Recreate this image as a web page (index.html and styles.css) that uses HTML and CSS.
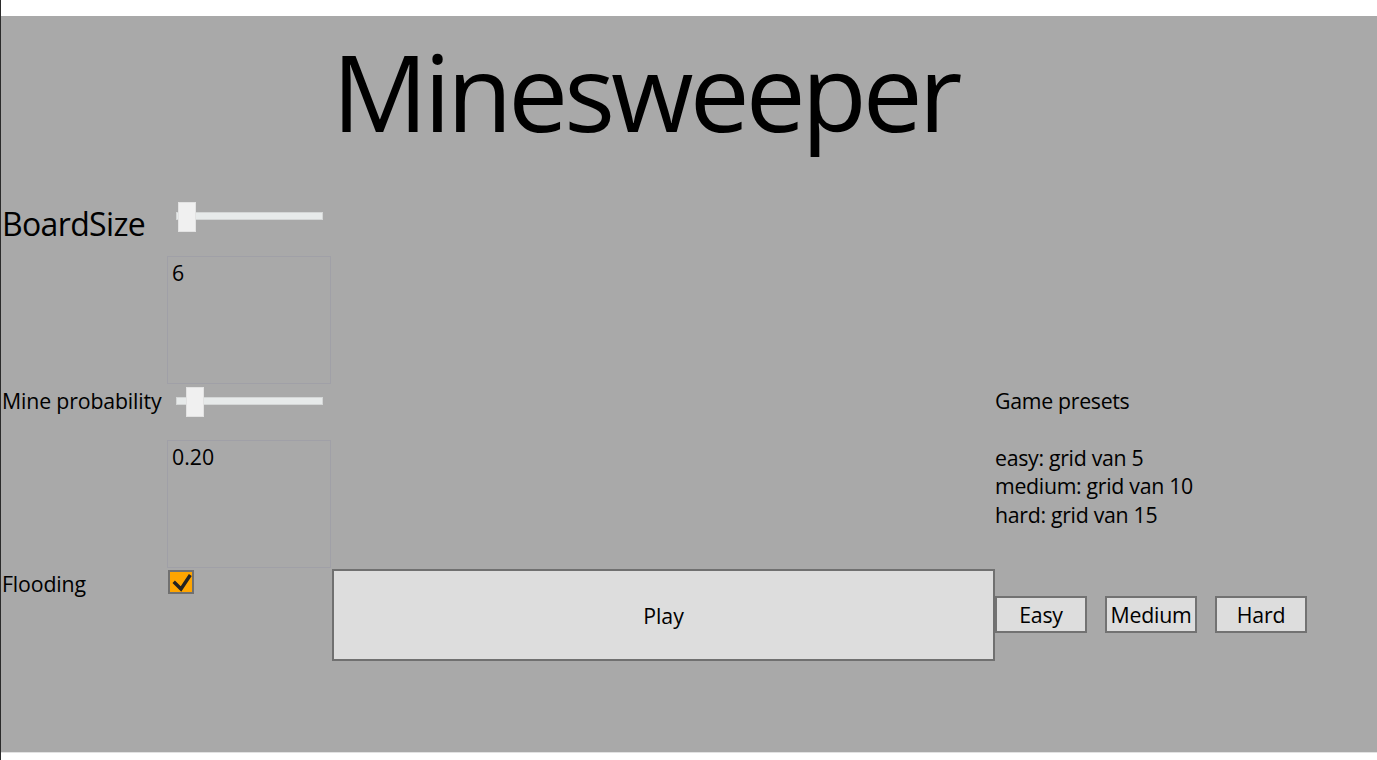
FILE: index.html
```html
<!DOCTYPE html>
<html>
<head>
<meta charset="utf-8">
<title>Minesweeper</title>
<link rel="stylesheet" href="styles.css">
</head>
<body>
<div class="topbar"></div>
<main class="app">
  <h1 class="title">Minesweeper</h1>

  <div class="label label-big r2">BoardSize</div>
  <div class="slider slider-board r2">
    <div class="track"></div>
    <div class="thumb" style="left: 2px"></div>
  </div>

  <div class="textbox r3">6</div>

  <div class="label label-mine r4">Mine probability</div>
  <div class="slider slider-mine r4">
    <div class="track"></div>
    <div class="thumb" style="left: 10px"></div>
  </div>

  <div class="presets">
    <div>Game presets</div>
    <div>&nbsp;</div>
    <div>easy: grid van 5</div>
    <div>medium: grid van 10</div>
    <div>hard: grid van 15</div>
  </div>

  <div class="textbox r5">0.20</div>

  <div class="label label-flood r6">Flooding</div>
  <div class="checkbox r6">
    <svg width="21" height="20" viewBox="0 0 21 20"><path d="M2.7 9.7 L10 17 L19.3 3" fill="none" stroke="#222" stroke-width="3.4" stroke-linejoin="miter"/></svg>
  </div>
  <button class="play r6">Play</button>
  <div class="preset-buttons r6">
    <button class="pbtn">Easy</button>
    <button class="pbtn">Medium</button>
    <button class="pbtn">Hard</button>
  </div>
</main>
<div class="bottombar"></div>
</body>
</html>
```

FILE: styles.css
```css
html, body {
  margin: 0;
  padding: 0;
  background: #ffffff;
}

body {
  width: 1376px;
  height: 760px;
  border-left: 1px solid #2b2b2b;
  font-family: "Open Sans", "Noto Sans", sans-serif;
  color: #000;
  overflow: hidden;
}

.topbar {
  height: 16px;
  background: #ffffff;
}

.bottombar {
  height: 7px;
  border-top: 1px solid #e2e2e2;
  background: #ffffff;
}

.app {
  height: 736px;
  background: #a9a9a9;
  display: grid;
  grid-template-columns: 166px 165px 663px 1fr;
  grid-template-rows: 176px 64px 128px 56px 128px 94px 1fr;
}

.title {
  grid-column: 3 / 5;
  grid-row: 1;
  margin: 0;
  padding-top: 4px;
  font-weight: 400;
  font-size: 106.7px;
  line-height: 1.33;
  letter-spacing: -4px;
  white-space: nowrap;
}

.r2 { grid-row: 2; }
.r3 { grid-row: 3; }
.r4 { grid-row: 4; }
.r5 { grid-row: 5; }
.r6 { grid-row: 6; }

.label {
  grid-column: 1;
  padding-left: 1px;
  font-size: 21.3px;
  line-height: 28.4px;
  letter-spacing: -0.15px;
  white-space: nowrap;
}

.label-big {
  font-size: 32px;
  line-height: 42.5px;
  letter-spacing: -0.65px;
  margin-top: 11px;
}

.label-mine {
  margin-top: 3px;
}

.label-flood {
  margin-top: 2px;
}

.slider {
  grid-column: 2;
  position: relative;
  margin-left: 9px;
  width: 147px;
  height: 30px;
}

.slider-board { margin-top: 10px; }
.slider-mine { margin-top: 3px; }

.track {
  margin-top: 10px;
  height: 8px;
  box-sizing: border-box;
  background: #e7eaea;
  border: 1px solid #d4d6d6;
}

.thumb {
  position: absolute;
  top: 0;
  width: 18px;
  height: 30px;
  box-sizing: border-box;
  background: #f0f0f0;
  border: 1px solid #e2e2e2;
}

.textbox {
  grid-column: 2;
  width: 164px;
  height: 128px;
  box-sizing: border-box;
  border: 1px solid #a0a0a7;
  padding: 2px 4px;
  font-size: 21.3px;
  line-height: 28.4px;
}

.presets {
  grid-column: 4;
  grid-row: 4 / 6;
  margin-top: 3px;
  font-size: 21.3px;
  line-height: 28.4px;
  letter-spacing: -0.3px;
  white-space: nowrap;
}

.checkbox {
  grid-column: 2;
  margin: 2px 0 0 1px;
  width: 26px;
  height: 24px;
  box-sizing: border-box;
  background: #ffa500;
  border: 2px solid #707070;
  display: flex;
  align-items: center;
  justify-content: center;
}

.checkbox svg {
  display: block;
}

.play {
  grid-column: 3;
  margin: 1px 0 0 0;
  height: 92px;
  box-sizing: border-box;
  background: #dddddd;
  border: 2px solid #707070;
  font-family: inherit;
  font-size: 21.3px;
  color: #000;
  padding: 0;
}

.preset-buttons {
  grid-column: 4;
  display: flex;
  gap: 18px;
  align-items: flex-start;
  margin-top: 28px;
}

.pbtn {
  width: 92px;
  height: 37px;
  box-sizing: border-box;
  background: #dddddd;
  border: 2px solid #727272;
  font-family: inherit;
  font-size: 21.3px;
  line-height: 28px;
  letter-spacing: -0.2px;
  color: #000;
  padding: 0;
}
```
